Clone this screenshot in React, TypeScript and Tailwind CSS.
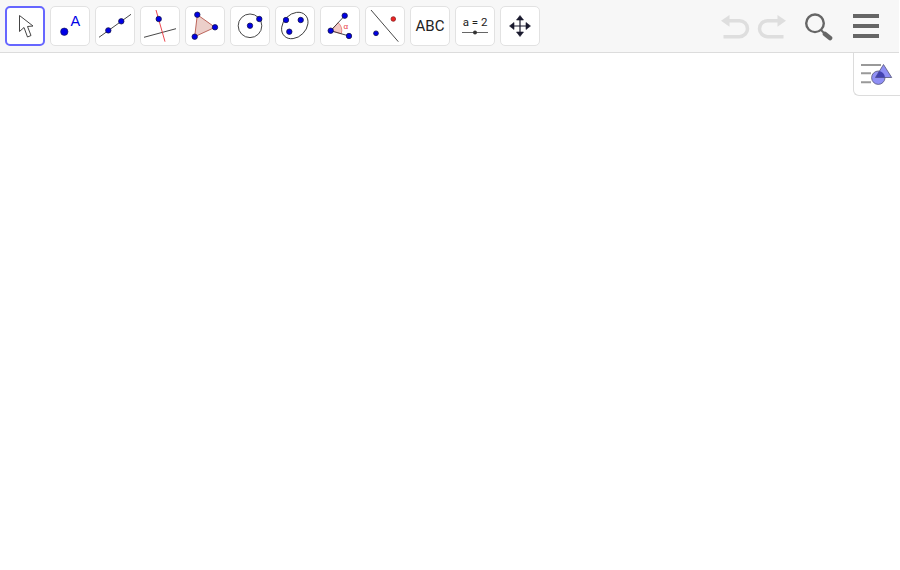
import { ReactNode } from "react";

const blue = "#0000e6";
const pt = "#14144d";

const Dot = ({ x, y, r = 2.7, fill = blue, stroke = pt }: { x: number; y: number; r?: number; fill?: string; stroke?: string }) => (
  <circle cx={x} cy={y} r={r} fill={fill} stroke={stroke} strokeWidth={0.8} />
);

const ToolButton = ({ active, children }: { active?: boolean; children: ReactNode }) => (
  <div
    className={
      active
        ? "w-10 h-10 shrink-0 rounded-[5px] bg-white border-2 border-[#6666ff] flex items-center justify-center"
        : "w-10 h-10 shrink-0 rounded-[5px] bg-white border border-[#e2e2e2] flex items-center justify-center"
    }
  >
    {children}
  </div>
);

const Icon = ({ children }: { children: ReactNode }) => (
  <svg width="40" height="40" viewBox="0 0 40 40" className="shrink-0">
    {children}
  </svg>
);

export default function App() {
  return (
    <div className="w-[900px] h-[570px] bg-white overflow-hidden relative font-['Liberation_Sans',sans-serif]">
      <div className="h-[53px] bg-[#f7f7f7] border-b border-[#dcdcdc] flex items-start pt-1.5 pl-[5px] mr-[1px]">
        <div className="flex gap-[5px]">
          <ToolButton active>
            <svg width="36" height="36" viewBox="0 0 36 36">
              <path d="M12.5 7.5 L12.5 23.5 L17 19.5 L20.5 29 L24 27.5 L20.5 18.5 L26 18 Z" fill="#fff" stroke="#444" strokeWidth="1" />
            </svg>
          </ToolButton>
          <ToolButton>
            <Icon>
              <circle cx="14.3" cy="25.7" r="3.7" fill={blue} stroke={pt} strokeWidth="0.6" />
              <text x="20.6" y="19.5" fontSize="14.5" fill={blue} fontFamily="Liberation Sans">A</text>
            </Icon>
          </ToolButton>
          <ToolButton>
            <Icon>
              <line x1="4" y1="31.3" x2="36" y2="8.3" stroke="#333" strokeWidth="0.9" />
              <Dot x={13.3} y={24.4} />
              <Dot x={26.3} y={15.3} />
            </Icon>
          </ToolButton>
          <ToolButton>
            <Icon>
              <line x1="4" y1="31.3" x2="36" y2="22.7" stroke="#333" strokeWidth="0.9" />
              <line x1="16" y1="4" x2="25" y2="35.7" stroke="#e8333c" strokeWidth="0.9" />
              <Dot x={18.7} y={13} />
            </Icon>
          </ToolButton>
          <ToolButton>
            <Icon>
              <path d="M12.3 8.7 L30 21.3 L9.7 30.7 Z" fill="#eccfca" stroke="#b5574c" strokeWidth="0.9" />
              <Dot x={12.3} y={8.7} />
              <Dot x={30} y={21.3} />
              <Dot x={9.7} y={30.7} />
            </Icon>
          </ToolButton>
          <ToolButton>
            <Icon>
              <circle cx="20" cy="19.8" r="11.8" fill="none" stroke="#333" strokeWidth="0.9" />
              <Dot x={20} y={19.7} />
              <Dot x={29.3} y={13} />
            </Icon>
          </ToolButton>
          <ToolButton>
            <Icon>
              <ellipse cx="19.8" cy="19.5" rx="14.8" ry="11.4" transform="rotate(-45 19.8 19.5)" fill="none" stroke="#333" strokeWidth="0.9" />
              <Dot x={11} y={14} />
              <Dot x={25.7} y={14} />
              <Dot x={14.3} y={25.7} />
            </Icon>
          </ToolButton>
          <ToolButton>
            <Icon>
              <path d="M10.7 24.7 L18.2 16.7 A11 11 0 0 1 21.3 27.8 Z" fill="#f3c9c4" stroke="#e57373" strokeWidth="0.8" />
              <line x1="10.7" y1="24.7" x2="24.7" y2="9.7" stroke="#333" strokeWidth="0.9" />
              <line x1="10.7" y1="24.7" x2="29" y2="30" stroke="#333" strokeWidth="0.9" />
              <Dot x={10.7} y={24.7} />
              <Dot x={24.7} y={9.7} />
              <Dot x={29} y={30} />
              <text x="23.6" y="23" fontSize="8" fill="#e8333c" fontFamily="Liberation Sans">α</text>
            </Icon>
          </ToolButton>
          <ToolButton>
            <Icon>
              <line x1="6" y1="4" x2="33.3" y2="35.7" stroke="#333" strokeWidth="0.9" />
              <Dot x={28.3} y={13} r={2.3} fill="#ee2222" stroke="#8a2222" />
              <Dot x={11} y={27.3} r={2.4} />
            </Icon>
          </ToolButton>
          <ToolButton>
            <span className="text-[15px] text-[#222] leading-none font-['Roboto',sans-serif]">ABC</span>
          </ToolButton>
          <ToolButton>
            <div className="flex flex-col items-center pb-[2px]">
              <span className="text-[11.5px] leading-[12px] text-[#222] mb-[2px] font-['Roboto',sans-serif]">a = 2</span>
              <svg width="26" height="5" viewBox="0 0 26 5">
                <line x1="0" y1="2.5" x2="26" y2="2.5" stroke="#666" strokeWidth="1" />
                <circle cx="13" cy="2.5" r="2" fill="#333" />
              </svg>
            </div>
          </ToolButton>
          <ToolButton>
            <Icon>
              <path d="M20 11 V29 M11 20 H29" stroke="#1a1a2e" strokeWidth="1.2" />
              <path d="M20 9.5 L16.5 14 H23.5 Z M20 30.5 L16.5 26 H23.5 Z M9.5 20 L14 16.5 V23.5 Z M30.5 20 L26 16.5 V23.5 Z" fill="#1a1a2e" stroke="#1a1a2e" strokeWidth="0.6" strokeLinejoin="round" />
            </Icon>
          </ToolButton>
        </div>

        <div className="ml-auto flex items-center h-10 pr-[20px]">
          <svg width="30" height="26" viewBox="0 0 30 26" className="mr-[7px]">
            <path d="M9 7.7 H19.5 A8 8 0 0 1 19.5 23.7 H3.5" fill="none" stroke="#dedede" strokeWidth="3.5" />
            <path d="M1 7.7 L9.5 2 V13.7 Z" fill="#dedede" />
          </svg>
          <svg width="30" height="26" viewBox="0 0 30 26" className="mr-[16px]">
            <path d="M21 7.7 H10.5 A8 8 0 0 0 10.5 23.7 H26.5" fill="none" stroke="#dedede" strokeWidth="3.5" />
            <path d="M29 7.7 L20.5 2 V13.7 Z" fill="#dedede" />
          </svg>
          <svg width="30" height="30" viewBox="0 0 30 30" className="mr-[20px]">
            <circle cx="12" cy="12.3" r="8.8" fill="none" stroke="#666" strokeWidth="2.4" />
            <line x1="18" y1="19" x2="24" y2="25" stroke="#666" strokeWidth="2" />
            <line x1="22" y1="23" x2="27" y2="27" stroke="#666" strokeWidth="4.6" strokeLinecap="round" />
          </svg>
          <div className="w-[26px] flex flex-col gap-[6.5px]">
            <div className="h-[3.5px] bg-[#666]" />
            <div className="h-[3.5px] bg-[#666]" />
            <div className="h-[3.5px] bg-[#666]" />
          </div>
        </div>
      </div>

      {/* style bar toggle */}
      <div className="absolute right-0 top-[53px] w-[47px] h-[43px] bg-white border-l border-b border-[#dcdcdc] rounded-bl-[6px] flex items-center justify-center">
        <svg width="34" height="26" viewBox="0 0 34 26">
          <defs>
            <clipPath id="overlap">
              <circle cx="18.3" cy="16.7" r="6.7" />
            </clipPath>
          </defs>
          <path d="M1 4 H21 M1 12.3 H11 M1 21.3 H11" stroke="#999" strokeWidth="2" />
          <circle cx="18.3" cy="16.7" r="6.7" fill="#8f8ff5" stroke="#55557a" strokeWidth="0.8" />
          <path d="M23.5 3.5 L31.7 16.5 H15.5 Z" fill="#8f8ff5" stroke="#55557a" strokeWidth="0.8" />
          <path d="M23.5 3.5 L31.7 16.5 H15.5 Z" fill="#4242b0" clipPath="url(#overlap)" />
        </svg>
      </div>
    </div>
  );
}
